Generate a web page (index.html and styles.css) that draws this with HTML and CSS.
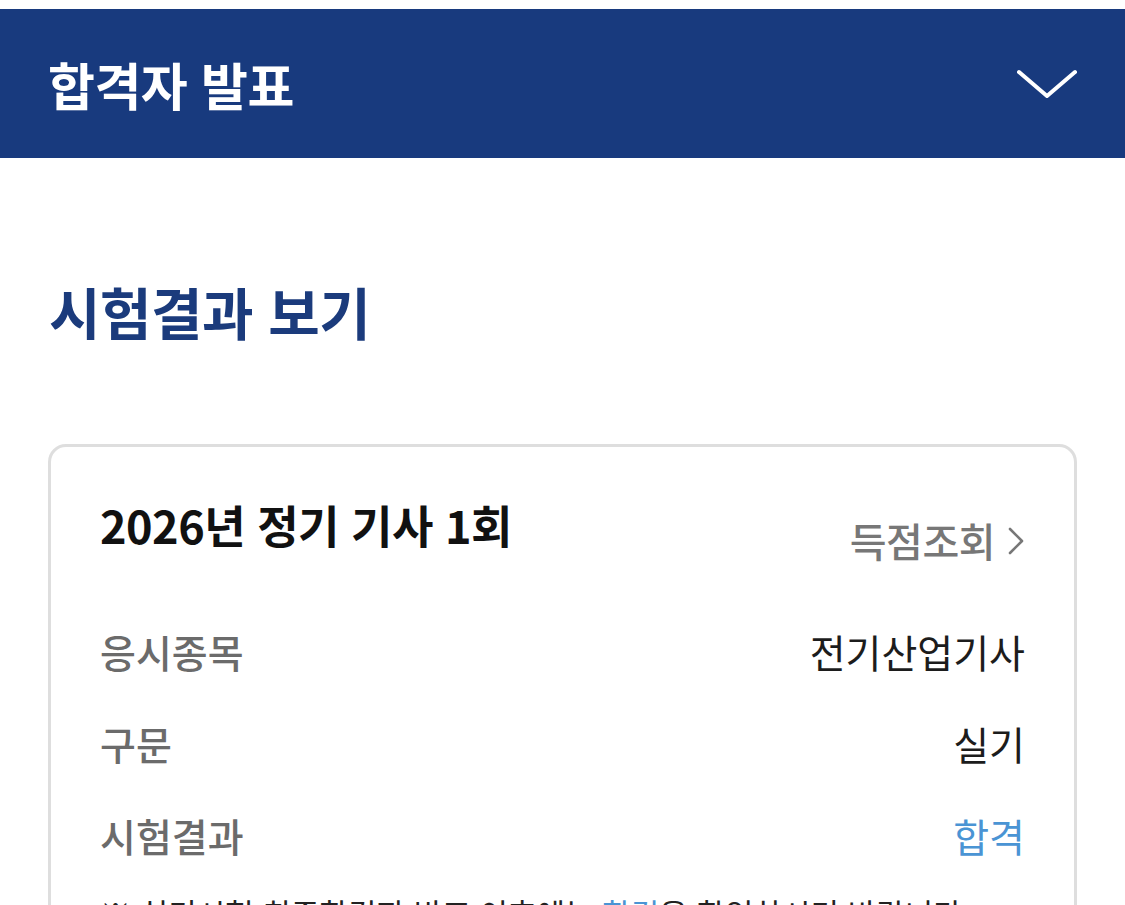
FILE: index.html
```html
<!DOCTYPE html>
<html lang="ko">
<head>
<meta charset="utf-8">
<title>합격자 발표</title>
<link rel="stylesheet" href="styles.css">
</head>
<body>
<div class="topstrip"></div>
<header class="appbar">
  <h1 class="appbar-title">합격자 발표</h1>
  <svg class="appbar-toggle" width="60" height="30" viewBox="0 0 60 30" aria-hidden="true">
    <polyline points="2,3 30,27 58,3" fill="none" stroke="#ffffff" stroke-width="4" stroke-linecap="round" stroke-linejoin="round"/>
  </svg>
</header>
<main class="content">
  <h2 class="section-title">시험결과 보기</h2>
  <section class="card">
    <div class="card-head">
      <h3 class="card-title">2026년 정기 기사 1회</h3>
      <a class="card-link">득점조회
        <svg class="card-link-icon" width="18" height="28" viewBox="0 0 18 28" aria-hidden="true">
          <polyline points="3,2 15,14 3,26" fill="none" stroke="#777777" stroke-width="2.6" stroke-linecap="round" stroke-linejoin="round"/>
        </svg>
      </a>
    </div>
    <dl class="rows">
      <div class="row"><dt class="row-label">응시종목</dt><dd class="row-value">전기산업기사</dd></div>
      <div class="row"><dt class="row-label">구문</dt><dd class="row-value">실기</dd></div>
      <div class="row"><dt class="row-label">시험결과</dt><dd class="row-value row-value-pass">합격</dd></div>
    </dl>
    <p class="notice">※ 실기시험 최종합격자 발표 이후에는 <span class="notice-em">합격</span>을 확인하시기 바랍니다</p>
  </section>
</main>
</body>
</html>
```
FILE: styles.css
```css
html, body {
  margin: 0;
  padding: 0;
  background: #ffffff;
  font-family: "Noto Sans CJK KR", "Noto Sans", sans-serif;
}

.topstrip {
  height: 9px;
  background: #ffffff;
}

.appbar {
  height: 149px;
  background: #183a7e;
  display: flex;
  align-items: center;
  justify-content: space-between;
  padding: 0 48px 0 48px;
  box-sizing: border-box;
}

.appbar-title {
  margin: 0;
  color: #ffffff;
  font-size: 51px;
  font-weight: 700;
  line-height: 60px;
  letter-spacing: -0.5px;
}

.appbar-toggle {
  display: block;
}

.content {
  padding: 120px 48px 0 48px;
}

.section-title {
  margin: 0 0 100px 1px;
  color: #1b3b7c;
  font-size: 56px;
  font-weight: 700;
  line-height: 66px;
  letter-spacing: -0.5px;
}

.card {
  border: 3px solid #dedede;
  border-radius: 18px;
  padding: 51px 49px 60px 49px;
}

.card-head {
  display: flex;
  justify-content: space-between;
  align-items: flex-start;
}

.card-title {
  margin: 0;
  color: #111111;
  font-size: 45px;
  font-weight: 700;
  line-height: 54px;
  letter-spacing: -0.5px;
}

.card-link {
  margin-top: 16px;
  display: flex;
  align-items: center;
  gap: 12px;
  color: #777777;
  font-size: 40px;
  font-weight: 500;
  line-height: 52px;
  letter-spacing: -0.5px;
}

.card-link-icon {
  display: block;
  margin-top: 2px;
}

.rows {
  margin: 59px 0 0 0;
  display: flex;
  flex-direction: column;
  gap: 40px;
}

.row {
  display: flex;
  justify-content: space-between;
  align-items: center;
  line-height: 52px;
  font-size: 39px;
}

.row-label {
  margin: 0;
  color: #6b6b6b;
  font-weight: 500;
}

.row-value {
  margin: 0;
  color: #1c1c1c;
  font-weight: 400;
}

.row-value-pass {
  color: #4a94d4;
}

.notice {
  margin: 26px 0 0 0;
  font-size: 31px;
  line-height: 52px;
  color: #222222;
}

.notice-em {
  color: #4a94d4;
}
```
